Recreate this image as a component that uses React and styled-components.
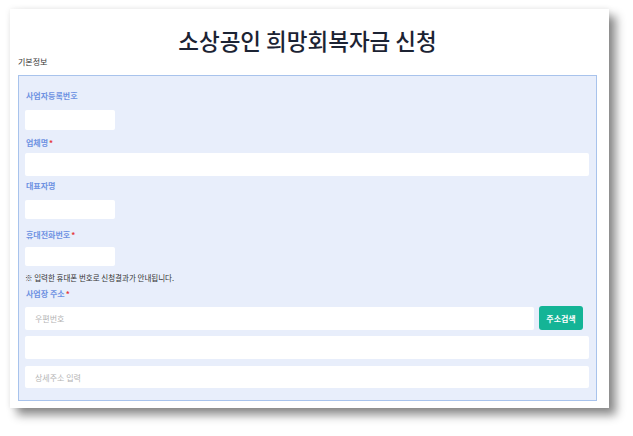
import React from 'react';
import styled, { createGlobalStyle } from 'styled-components';

const GlobalStyle = createGlobalStyle`
  html, body {
    margin: 0;
    padding: 0;
    background: #ffffff;
  }
  body {
    font-family: "Noto Sans CJK KR", "Noto Sans", sans-serif;
  }
  * { box-sizing: border-box; }
`;

const Page = styled.div`
  width: 633px;
  height: 436px;
  padding: 9px 0 0 10px;
  overflow: hidden;
`;

const Card = styled.div`
  width: 599px;
  height: 399px;
  background: #ffffff;
  box-shadow: 7px 7px 9px rgba(0, 0, 0, 0.45), 0 0 6px rgba(0, 0, 0, 0.08);
  display: flex;
  flex-direction: column;
  padding: 0 12px 0 8px;
`;

const Title = styled.h1`
  margin: 0;
  padding-top: 16px;
  height: 47px;
  font-size: 22.5px;
  font-weight: 500;
  line-height: 30px;
  color: #1c2333;
  text-align: center;
`;

const SectionName = styled.div`
  font-size: 8px;
  line-height: 12px;
  color: #333333;
  height: 19px;
`;

const FormBox = styled.div`
  border: 1px solid #a8c3ec;
  background: #e8eefb;
  padding: 14px 7px 12px 6px;
  display: flex;
  flex-direction: column;
`;

const Label = styled.div`
  font-size: 8px;
  font-weight: 700;
  line-height: 12px;
  color: #6e92e2;
  padding-left: 1px;
  margin-top: ${p => p.$mt || 0}px;
`;

const Star = styled.span`
  color: #e5393b;
  margin-left: 1px;
`;

const Input = styled.input`
  display: block;
  border: none;
  outline: none;
  background: #ffffff;
  width: ${p => (p.$small ? '90px' : '100%')};
  height: ${p => p.$h || 23}px;
  margin-top: ${p => p.$mt || 0}px;
  padding: 0 10px;
  font-family: inherit;
  font-size: 8px;
  color: #333333;
  border-radius: 2px;
  &::placeholder {
    color: #b4b4b4;
  }
`;

const Note = styled.div`
  font-size: 7.5px;
  line-height: 12px;
  color: #333333;
  margin-top: 6px;
`;

const Row = styled.div`
  display: flex;
  align-items: flex-end;
  gap: 5px;
  margin-top: 6px;
  height: 24px;
  padding-right: 6px;
`;

const SearchButton = styled.button`
  flex: 0 0 44px;
  height: 24px;
  border: none;
  border-radius: 3px;
  background: #14b496;
  color: #ffffff;
  font-family: inherit;
  font-size: 8px;
  font-weight: 700;
  padding: 0;
`;

export default function App() {
  return (
    <Page>
      <GlobalStyle />
      <Card>
        <Title>소상공인 희망회복자금 신청</Title>
        <SectionName>기본정보</SectionName>
        <FormBox>
          <Label>사업자등록번호</Label>
          <Input $small $h={20} $mt={8} />

          <Label $mt={7}>업체명<Star>*</Star></Label>
          <Input $h={23} $mt={4} />

          <Label $mt={4}>대표자명</Label>
          <Input $small $h={19} $mt={8} />

          <Label $mt={10}>휴대전화번호<Star>*</Star></Label>
          <Input $small $h={19} $mt={6} />

          <Note>※ 입력한 휴대폰 번호로 신청결과가 안내됩니다.</Note>

          <Label $mt={4}>사업장 주소<Star>*</Star></Label>
          <Row>
            <Input $h={23} placeholder="우편번호" />
            <SearchButton>주소검색</SearchButton>
          </Row>
          <Input $h={23} $mt={6} />
          <Input $h={22} $mt={7} placeholder="상세주소 입력" />
        </FormBox>
      </Card>
    </Page>
  );
}
